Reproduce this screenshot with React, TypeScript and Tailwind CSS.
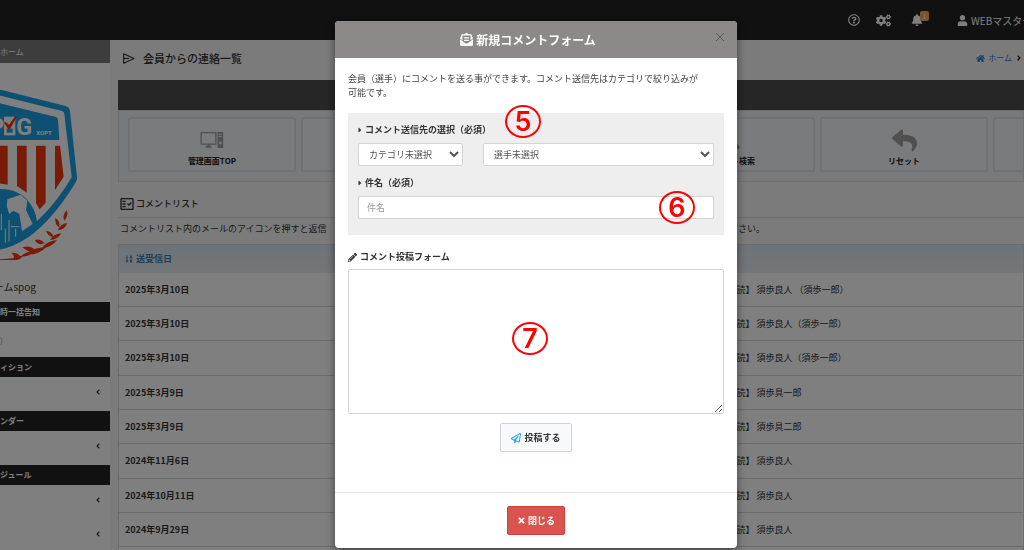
import type { ReactNode } from 'react'
import {
  FaAngleLeft,
  FaAngleRight,
  FaBell,
  FaCaretRight,
  FaCogs,
  FaEnvelopeOpenText,
  FaHome,
  FaPencilAlt,
  FaRegPaperPlane,
  FaRegQuestionCircle,
  FaReply,
  FaSearch,
  FaSortAlphaDown,
  FaTimes,
  FaUser,
} from 'react-icons/fa'
import { MdOutlineFactCheck } from 'react-icons/md'

const rows = [
  { date: '2025年3月10日', name: '須歩良人 （須歩一郎）' },
  { date: '2025年3月10日', name: '須歩良人（須歩一郎）' },
  { date: '2025年3月10日', name: '須歩良人（須歩一郎）' },
  { date: '2025年3月9日', name: '須歩具一郎' },
  { date: '2025年3月9日', name: '須歩具二郎' },
  { date: '2024年11月6日', name: '須歩良人' },
  { date: '2024年10月11日', name: '須歩良人' },
  { date: '2024年9月29日', name: '須歩良人' },
  { date: '2024年9月29日', name: '須歩良人' },
]

function DesktopIcon() {
  return (
    <svg viewBox="0 0 72 50" className="w-6 h-4" fill="none" stroke="currentColor" strokeWidth="4">
      <rect x="2" y="2" width="46" height="36" />
      <path d="M16 46h18M25 38v8" strokeWidth="6" />
      <path d="M53 0h18v50H53z" fill="currentColor" stroke="none" />
      <path d="M57 7h10M57 14h10" stroke="#f5f7f8" strokeWidth="3" />
      <circle cx="62" cy="34" r="4" fill="#f5f7f8" stroke="none" />
    </svg>
  )
}

function SendIcon() {
  return (
    <svg viewBox="0 0 36 32" className="w-3 h-[11px]" fill="none" stroke="currentColor" strokeWidth="3.5" strokeLinejoin="round">
      <path d="M2 2 33 16 2 30Z" />
      <path d="M2 16h16" />
    </svg>
  )
}

function TeamLogo() {
  return (
    <svg viewBox="0 30 330 570" className="w-full">
      <path d="M-10 88 5 90 197 138Q208 141 210 153L231 352Q232 360 227 367C175 455 95 550 5 568L-10 570Z" fill="#1ba0e2" />
      <path d="M-10 106 5 108 186 153Q192 155 193 162L215 352C165 436 85 530-10 552Z" fill="#fff" />
      <path d="M-10 128 5 131 168 171Q173 173 174 179L178 240H-10Z" fill="#1ba0e2" />
      <g fill="#f5370c">
        <path d="M-6 257H23V374L-6 370ZM51 257H80V398L51 378ZM108 257H137V428L119 448 108 430ZM165 257H180L191 350 165 390Z" />
      </g>
      <path d="M-10 388C55 380 106 425 112 490L125 484C90 530 45 558-10 566Z" fill="#1ba0e2" />
      <path d="M22 418 62 404 82 422 78 450 98 492 66 514 58 462 40 452 28 462 20 440Z" fill="#fff" />
      <g fill="#1ba0e2">
        <circle cx="10" cy="446" r="12" />
        <path d="M-8 462H20Q30 464 32 476L36 506 24 508 20 548H-8Z" />
        <circle cx="43" cy="466" r="10" />
        <path d="M30 480H52Q62 482 62 496V528H30Z" />
      </g>
      <path d="M4 462V510M16 506V548M27 480V545M47 506V530M32 500H58" stroke="#fff" strokeWidth="3" fill="none" />
      <text x="-32" y="224" fontSize="70" fontWeight="700" fill="#fff" className="font-['Roboto']">
        P
      </text>
      <path d="M12 170H46V226H12Z" fill="#fff" />
      <path d="M20 206H38V218H20Z" fill="#1ba0e2" />
      <path d="M14 184 27 194 46 168 50 172 30 207H25L13 191Z" fill="#f5370c" />
      <text x="49" y="224" fontSize="70" fontWeight="700" fill="#fff" className="font-['Roboto']">
        G
      </text>
      <text x="109" y="224" fontSize="18" fontWeight="700" fill="#fff" className="font-['Roboto']">
        XOPT
      </text>
      <g fill="#f5370c">
        <path d="M200 450Q206 466 194 482Q184 470 200 450ZM166 474Q182 484 178 502Q164 494 166 474ZM202 488Q196 508 174 511Q180 492 202 488Z" />
        <path d="M138 512Q156 514 160 530Q144 530 138 512ZM184 520Q172 540 150 540Q160 522 184 520Z" />
        <path d="M104 540Q122 534 134 550Q114 558 104 540ZM171 540Q156 562 124 566Q138 544 171 540Z" />
        <path d="M68 562Q92 554 106 572Q84 580 68 562ZM138 562Q118 586 74 584Q100 562 138 562Z" />
        <path d="M34 578Q54 578 60 588L70 588Q58 604 30 600L0 602V598L40 595Q46 588 34 578ZM102 574Q90 590 62 590Q76 574 102 574Z" />
      </g>
    </svg>
  )
}

function SideSection({ title, children }: { title: string; children?: ReactNode }) {
  return (
    <section>
      <h2 className="h-5 bg-[#222] text-white font-bold leading-5 whitespace-nowrap">{title}</h2>
      {children}
    </section>
  )
}

function SideToggle({ label }: { label: string }) {
  return (
    <button type="button" aria-label={label} className="flex w-full h-[34px] items-center justify-end pr-2 pb-1">
      <FaAngleLeft className="size-2" />
    </button>
  )
}

function Sidebar() {
  return (
    <aside className="w-[110px] shrink-0 overflow-hidden bg-white text-[8px] text-[#333]">
      <a href="#home" className="block h-[23px] bg-[#7a7a7a] text-white leading-[23px]">ホーム</a>
      <div className="pt-[7px]">
        <TeamLogo />
      </div>
      <p className="mt-[18px] mb-[6px] flex w-9 justify-end text-[10px] leading-[18px] whitespace-nowrap">ームspog</p>
      <SideSection title="時一括告知">
        <p className="h-[35px] leading-[35px] text-[#999]">)</p>
      </SideSection>
      <SideSection title="ィション">
        <SideToggle label="ディション" />
      </SideSection>
      <SideSection title="ンダー">
        <SideToggle label="カレンダー" />
      </SideSection>
      <SideSection title="ジュール">
        <SideToggle label="スケジュール" />
        <SideToggle label="スケジュール設定" />
      </SideSection>
    </aside>
  )
}

function MenuCard({ icon, label }: { icon: ReactNode; label: string }) {
  return (
    <a href="#menu" className="flex w-[168px] h-[55px] shrink-0 flex-col items-center border-2 border-[#dfe5e9] bg-[#f5f7f8] pt-3 rounded-xs">
      <span className="flex h-[18px] items-center text-[#a0a0a0]">{icon}</span>
      <span className="mt-[6px] text-[8px] leading-3 font-bold text-[#222]">{label}</span>
    </a>
  )
}

function TopBar() {
  return (
    <header className="flex h-10 items-center justify-end overflow-hidden bg-[#222] text-[#fff]">
      <button type="button" aria-label="ヘルプ"><FaRegQuestionCircle className="size-3" /></button>
      <button type="button" aria-label="設定" className="ml-4"><FaCogs className="size-[15px]" /></button>
      <button type="button" aria-label="お知らせ" className="relative ml-5">
        <FaBell className="size-3" />
        <span className="absolute -top-[3px] left-[9px] w-[9px] h-[10px] rounded-xs bg-[#f0ad4e] text-[7px] leading-[10px] text-white">1</span>
      </button>
      <a href="#user" className="ml-[34px] flex w-[67px] items-center gap-[3px] text-[10px] whitespace-nowrap">
        <FaUser className="size-[11px] shrink-0" />
        WEBマスター
      </a>
    </header>
  )
}

function CommentList() {
  return (
    <main className="min-w-0 flex-1 overflow-hidden bg-[#f7f7f7] pl-2">
      <div className="flex h-10 items-center justify-between pb-1 pl-[5px]">
        <h1 className="flex items-center gap-2 text-[11px] text-[#333] font-medium">
          <SendIcon />
          会員からの連絡一覧
        </h1>
        <nav className="flex items-center gap-[3px] pr-px text-[8px]">
          <a href="#home" className="flex items-center gap-[3px] text-[#337ab7]">
            <FaHome className="size-[9px]" />
            ホーム
          </a>
          <FaAngleRight className="size-2" />
        </nav>
      </div>

      <div className="h-[30px] bg-[#4d4d4d]" />
      <div className="flex gap-[5px] overflow-hidden border border-[#dce3e8] bg-[#f0f3f5] pt-[6px] pr-2 pb-[9px] pl-[9px]">
        <MenuCard icon={<DesktopIcon />} label="管理画面TOP" />
        <MenuCard icon={<FaPencilAlt className="size-[18px]" />} label="新規コメント" />
        <MenuCard icon={<FaBell className="size-[18px]" />} label="お知らせ" />
        <MenuCard icon={<FaSearch className="size-[18px]" />} label="コメント検索" />
        <MenuCard icon={<FaReply className="size-[25px]" />} label="リセット" />
        <MenuCard icon={<FaCogs className="size-[18px]" />} label="設定" />
      </div>

      <h2 className="mt-[13px] flex h-[23px] items-center gap-px border-b border-[#ddd] pb-1 pl-px text-[9px] text-[#333] font-medium">
        <MdOutlineFactCheck className="size-4" />
        コメントリスト
      </h2>
      <p className="flex h-[26px] justify-between pr-[259px] pl-[2px] text-[9px] leading-[22px] text-[#333] whitespace-nowrap">
        <span>コメントリスト内のメールのアイコンを押すと返信</span>
        <span>下さい。</span>
      </p>

      <table className="w-full table-fixed border border-[#d5dde3] bg-white text-left text-[9px] text-[#333]">
        <thead>
          <tr className="h-7 bg-linear-to-b from-[#dbe6ef] to-[#e8edf2]">
            <th className="w-[600px] pl-[6px] text-[#337ab7]">
              <span className="flex items-center gap-[3px]">
                <FaSortAlphaDown className="size-[8px]" />
                送受信日
              </span>
            </th>
            <th aria-label="送信者" />
          </tr>
        </thead>
        <tbody>
          {rows.map((row, i) => (
            <tr key={i} className="h-[34px] nth-[3n]:h-[35px] border-b border-[#d8d8d8]">
              <th scope="row" className="pl-[6px]">{row.date}</th>
              <td className="whitespace-nowrap">【既読】 {row.name}</td>
            </tr>
          ))}
        </tbody>
      </table>
    </main>
  )
}

// numbered callout laid over the form
function Callout({ n, className }: { n: number; className: string }) {
  return (
    <span
      className={`absolute z-10 flex w-9 h-[33px] items-center justify-center rounded-[50%] border-2 border-[#ff0000] font-['Inter'] text-[27px] leading-none font-semibold text-[#ff0000] pointer-events-none ${className}`}
    >
      {n}
    </span>
  )
}

const field = 'h-[23px] rounded-xs border border-[#d4d4d4] bg-white text-[9px] text-[#555]'
const label = 'flex items-center gap-[3px] text-[9px] leading-3 font-bold text-[#333]'

function CommentDialog() {
  return (
    <div className="fixed inset-0 flex items-start justify-center overflow-hidden bg-black/50 pt-[21px] pl-12">
      <div role="dialog" aria-modal="true" aria-labelledby="dialog-title" className="w-[402px] rounded-sm bg-white shadow-[0_3px_9px_rgba(0,0,0,0.5)]">
        <div className="relative flex h-[37px] items-center justify-center rounded-t-sm bg-[#8d8989] pr-4 text-white">
          <h2 id="dialog-title" className="flex items-center gap-[3px] text-[12px] font-bold">
            <FaEnvelopeOpenText className="size-[13px]" />
            新規コメントフォーム
          </h2>
          <button type="button" aria-label="閉じる" className="absolute top-[11px] right-3 text-[#5e5b5b]">
            <svg viewBox="0 0 10 10" className="size-[10px]" stroke="currentColor" fill="none">
              <path d="M1 1 9 9M9 1 1 9" />
            </svg>
          </button>
        </div>

        <form className="px-[13px] pt-[14px] pb-10">
          <p className="text-[9px] leading-[14px] text-[#444]">
            会員（選手）にコメントを送る事ができます。コメント送信先はカテゴリで絞り込みが
            <br />
            可能です。
          </p>

          <div className="relative mt-[13px] bg-[#eee] px-[10px] pt-[11px] pb-4">
            <Callout n={5} className="top-[-8px] left-[157px]" />
            <Callout n={6} className="top-[78px] left-[311px]" />
            <label htmlFor="category" className={label}>
              <FaCaretRight className="w-1 h-2" />
              コメント送信先の選択（必須）
            </label>
            <div className="mt-[7px] flex gap-5">
              <select id="category" className={`${field} w-[105px] pl-[6px]`}>
                <option>カテゴリ未選択</option>
              </select>
              <select aria-label="選手" className={`${field} min-w-0 flex-1 pl-[6px]`}>
                <option>選手未選択</option>
              </select>
            </div>
            <label htmlFor="subject" className={`${label} mt-[11px]`}>
              <FaCaretRight className="w-1 h-2" />
              件名（必須）
            </label>
            <input id="subject" type="text" placeholder="件名" className={`${field} mt-[7px] block w-full px-2 placeholder:text-[#999]`} />
          </div>

          <label htmlFor="comment" className={`${label} mt-4`}>
            <FaPencilAlt className="size-[9px]" />
            コメント投稿フォーム
          </label>
          <div className="relative mt-[6px]">
            <Callout n={7} className="top-[53px] left-[164px]" />
            <textarea id="comment" className="block w-full h-[145px] rounded-xs border border-[#d4d4d4] p-2 text-[9px]" />
          </div>
          <div className="mt-[9px] flex justify-center">
            <button type="button" className="flex h-[29px] items-center gap-[3px] rounded-xs border border-[#ccd3d9] bg-[#f8f9fb] px-[10px] text-[9px] font-bold text-[#333]">
              <FaRegPaperPlane className="size-[10px] text-[#1e9fff]" />
              投稿する
            </button>
          </div>
        </form>

        <div className="flex justify-center border-t border-[#e5e5e5] py-[13px]">
          <button type="button" className="flex h-[29px] items-center gap-[2px] rounded-xs border border-[#d43f3a] bg-[#d9534f] px-[9px] text-[9px] font-bold text-white">
            <FaTimes className="size-[9px]" />
            閉じる
          </button>
        </div>
      </div>
    </div>
  )
}

export default function App() {
  return (
    <div className="flex h-screen flex-col overflow-hidden font-['Noto_Sans_CJK_JP','Noto_Sans',sans-serif]">
      <TopBar />
      <div className="flex min-h-0 flex-1">
        <Sidebar />
        <CommentList />
      </div>
      <CommentDialog />
    </div>
  )
}
